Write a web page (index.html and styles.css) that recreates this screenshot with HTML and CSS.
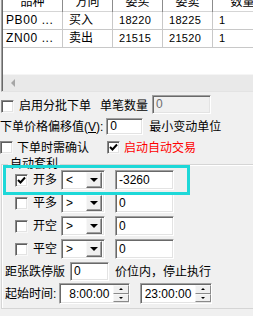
FILE: index.html
```html
<!DOCTYPE HTML>
<html>
<head>
    <meta charset="utf-8">
    <title>自动交易</title>
    <link rel="stylesheet" href="styles.css">
</head>
<body>
    <div class="list">
        <div class="lv">
            <div class="lv-head">
                <div class="c">品种</div>
                <div class="c">方向</div>
                <div class="c">委买</div>
                <div class="c">委卖</div>
                <div class="c">数量</div>
            </div>
            <div class="lv-row">
                <div class="c first">PB00 ...</div>
                <div class="c cn">买入</div>
                <div class="c">18220</div>
                <div class="c">18225</div>
                <div class="c">1</div>
            </div>
            <div class="lv-row">
                <div class="c first">ZN00 ...</div>
                <div class="c cn">卖出</div>
                <div class="c">21515</div>
                <div class="c">21520</div>
                <div class="c">1</div>
            </div>
            <div class="lv-fill"></div>
            <div class="hscroll"><i class="arrow-l"></i></div>
        </div>
    </div>

    <div class="row row-a">
        <span class="chk"></span>
        <span class="lbl">启用分批下单</span>
        <span class="lbl qty-lbl">单笔数量</span>
        <span class="edit disabled qty">0</span>
    </div>

    <div class="row row-b">
        <span class="lbl">下单价格偏移值(<u>V</u>):</span>
        <span class="edit offset">0</span>
        <span class="lbl unit">最小变动单位</span>
    </div>

    <div class="row row-c">
        <span class="chk"></span>
        <span class="lbl">下单时需确认</span>
        <span class="chk on auto-chk"><svg width="9" height="9" viewBox="0 0 9 9"><path d="M1 4 L3.5 6.5 L8 1.5" fill="none" stroke="#000" stroke-width="2"/></svg></span>
        <span class="lbl red">启动自动交易</span>
    </div>

    <div class="group">
        <span class="group-title">自动套利</span>
        <div class="focus-box"></div>

        <div class="arb">
            <span class="chk on"><svg width="9" height="9" viewBox="0 0 9 9"><path d="M1 4 L3.5 6.5 L8 1.5" fill="none" stroke="#000" stroke-width="2"/></svg></span>
            <span class="lbl">开多</span>
            <span class="combo"><span class="combo-val">&lt;</span><span class="drop"><i class="tri-dn"></i></span></span>
            <span class="edit val">-3260</span>
        </div>
        <div class="arb">
            <span class="chk"></span>
            <span class="lbl">平多</span>
            <span class="combo"><span class="combo-val">&gt;</span><span class="drop"><i class="tri-dn"></i></span></span>
            <span class="edit val">0</span>
        </div>
        <div class="arb">
            <span class="chk"></span>
            <span class="lbl">开空</span>
            <span class="combo"><span class="combo-val">&gt;</span><span class="drop"><i class="tri-dn"></i></span></span>
            <span class="edit val">0</span>
        </div>
        <div class="arb">
            <span class="chk"></span>
            <span class="lbl">平空</span>
            <span class="combo"><span class="combo-val">&gt;</span><span class="drop"><i class="tri-dn"></i></span></span>
            <span class="edit val">0</span>
        </div>

        <div class="row row-stop">
            <span class="lbl">距张跌停版</span>
            <span class="edit stop">0</span>
            <span class="lbl stop-lbl">价位内，停止执行</span>
        </div>

        <div class="row row-time">
            <span class="lbl">起始时间:</span>
            <span class="spin first-spin">
                <span class="spin-val">8:00:00</span>
                <span class="spin-btns"><span class="sb"><i class="tri-up"></i></span><span class="sb"><i class="tri-sm-dn"></i></span></span>
            </span>
            <span class="spin second-spin">
                <span class="spin-val">23:00:00</span>
                <span class="spin-btns"><span class="sb"><i class="tri-up"></i></span><span class="sb"><i class="tri-sm-dn"></i></span></span>
            </span>
        </div>
    </div>
</body>
</html>
```

FILE: styles.css
```css
* {
    box-sizing: border-box;
}
html, body {
    margin: 0;
    padding: 0;
}
body {
    width: 253px;
    height: 316px;
    overflow: hidden;
    background: #f0f0f0;
    color: #000;
    font-family: "Liberation Sans", "Noto Sans CJK SC", sans-serif;
    font-size: 12px;
    line-height: 14px;
}

/* list view */
.list {
    margin: -8px -60px 0 1px;
    border-left: 1px solid #a0a0a0;
    border-bottom: 1px solid #e3e3e3;
}
.lv {
    height: 99px;
    display: flex;
    flex-direction: column;
    background: #fff;
    border-left: 1px solid #696969;
}
.lv-head,
.lv-row {
    display: grid;
    grid-template-columns: 60px 50px 50px 50px 60px;
}
.lv-head {
    height: 20px;
    border-bottom: 1px solid #d5d5d5;
}
.lv-head .c {
    border-right: 1px solid #8c8c8c;
    text-align: center;
    line-height: 20px;
}
.lv-row {
    height: 18px;
    border-bottom: 1px solid #c8c8c8;
}
.lv-row .c {
    border-right: 1px solid #c8c8c8;
    padding-left: 6px;
    line-height: 17px;
    white-space: nowrap;
    font-size: 11px;
    letter-spacing: 0.3px;
}
.lv-row .c.cn {
    font-size: 12px;
    letter-spacing: 0;
}
.lv-row .c.first {
    padding-left: 3px;
    font-size: 12px;
    letter-spacing: 0.6px;
}
.lv-fill {
    flex: 1;
}
.hscroll {
    height: 17px;
    background: #e9e9e9;
    border-top: 1px solid #f5f5f5;
    display: flex;
    align-items: center;
}
.arrow-l {
    margin-left: 8px;
    width: 0;
    height: 0;
    border-right: 4px solid #a6a6a6;
    border-top: 4px solid transparent;
    border-bottom: 4px solid transparent;
}

/* generic controls */
.row {
    display: flex;
    align-items: center;
    white-space: nowrap;
}
.lbl {
    display: block;
}
.red {
    color: #ff0000;
}
.chk {
    width: 13px;
    height: 13px;
    flex: none;
    background: #fff;
    border: 1px solid;
    border-color: #8a8a8a #f8f8f8 #f8f8f8 #8a8a8a;
    box-shadow: inset 1px 1px 0 #5e5e5e, inset -1px -1px 0 #e3e3e3;
    display: flex;
    align-items: center;
    justify-content: center;
}
.edit {
    display: block;
    flex: none;
    background: #fff;
    border: 1px solid;
    border-color: #a0a0a0 #fff #fff #a0a0a0;
    box-shadow: inset 1px 1px 0 #696969, inset -1px -1px 0 #e3e3e3;
    padding-left: 3px;
}
.edit.disabled {
    background: #f0f0f0;
    color: #6d6d6d;
}

/* top rows */
.row-a {
    margin-top: 3px;
    height: 19px;
}
.row-a .chk {
    margin-left: 1px;
    margin-top: 4px;
}
.row-a .lbl {
    margin-top: 3px;
}
.row-a .chk + .lbl {
    margin-left: 5px;
}
.qty-lbl {
    margin-left: 9px;
}
.qty {
    margin-left: 4px;
    width: 59px;
    height: 19px;
    line-height: 17px;
}
.row-b {
    margin-top: 4px;
    height: 17px;
}
.offset {
    margin-left: 3px;
    width: 37px;
    height: 17px;
    line-height: 15px;
}
.unit {
    margin-left: 6px;
}
.row-c {
    margin-top: 6px;
    height: 13px;
}
.row-c .chk + .lbl {
    margin-left: 4px;
}
.auto-chk {
    margin-left: 18px;
}

/* group box */
.group {
    position: relative;
    margin: 10px -20px 0 1px;
    border: 1px solid #d5d5d5;
    box-shadow: inset 1px 1px 0 #fff;
    padding: 5px 0 2px 12px;
    height: 145px;
}
.group-title {
    position: absolute;
    top: -8px;
    left: 6px;
    padding: 0 2px;
    background: #f0f0f0;
}
.focus-box {
    position: absolute;
    top: 0;
    left: 1px;
    width: 187px;
    height: 30px;
    border: 3px solid #1ed8d8;
}
.arb {
    display: flex;
    align-items: center;
    height: 20px;
    margin-bottom: 3px;
}
.arb .chk {
    margin-left: 1px;
}
.arb .lbl {
    margin-left: 5px;
}
.combo {
    margin-left: 4px;
    width: 44px;
    height: 20px;
    display: flex;
    align-items: center;
    background: #fff;
    border: 1px solid;
    border-color: #a0a0a0 #fff #fff #a0a0a0;
    box-shadow: inset 1px 1px 0 #696969, inset -1px -1px 0 #e3e3e3;
    padding: 1px 2px 1px 4px;
}
.combo-val {
    flex: 1;
}
.drop {
    width: 16px;
    height: 16px;
    background: #f0f0f0;
    border: 1px solid;
    border-color: #f8f8f8 #696969 #696969 #f8f8f8;
    box-shadow: inset -1px -1px 0 #a0a0a0;
    display: flex;
    align-items: center;
    justify-content: center;
}
.tri-dn {
    width: 0;
    height: 0;
    border-top: 4px solid #000;
    border-left: 4px solid transparent;
    border-right: 4px solid transparent;
}
.val {
    margin-left: 10px;
    width: 59px;
    height: 20px;
    line-height: 18px;
}

.row-stop {
    margin-top: 1px;
    height: 19px;
    padding-left: 3px;
    margin-left: -12px;
}
.stop {
    margin-left: 5px;
    width: 39px;
    height: 19px;
    line-height: 17px;
}
.stop-lbl {
    margin-left: 6px;
}
.row-time {
    margin-top: 2px;
    height: 21px;
    padding-left: 3px;
    margin-left: -12px;
}
.spin {
    display: flex;
    height: 21px;
    background: #fff;
    border: 1px solid;
    border-color: #a0a0a0 #fff #fff #a0a0a0;
    box-shadow: inset 1px 1px 0 #696969, inset -1px -1px 0 #e3e3e3;
    padding: 1px 0 1px 1px;
}
.first-spin {
    margin-left: 3px;
    width: 71px;
}
.second-spin {
    margin-left: 10px;
    width: 72px;
}
.spin-val {
    flex: 1;
    text-align: right;
    padding-right: 4px;
    line-height: 19px;
}
.spin-btns {
    width: 16px;
    display: flex;
    flex-direction: column;
}
.sb {
    flex: 1;
    background: #f0f0f0;
    border: 1px solid;
    border-color: #f8f8f8 #8a8a8a #8a8a8a #f8f8f8;
    display: flex;
    align-items: center;
    justify-content: center;
}
.tri-up {
    width: 0;
    height: 0;
    border-bottom: 2px solid #000;
    border-left: 2px solid transparent;
    border-right: 2px solid transparent;
}
.tri-sm-dn {
    width: 0;
    height: 0;
    border-top: 2px solid #000;
    border-left: 2px solid transparent;
    border-right: 2px solid transparent;
}
```
